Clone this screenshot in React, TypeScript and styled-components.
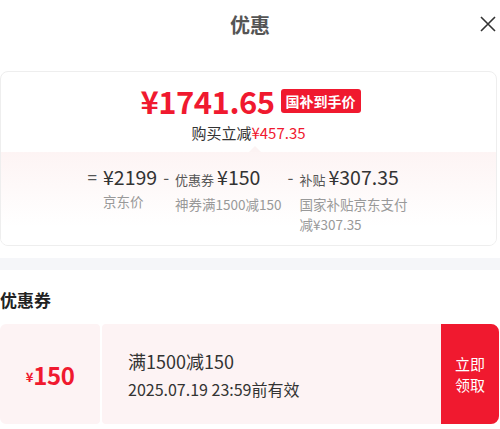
import React from "react"
import styled, { createGlobalStyle } from "styled-components"

const GlobalStyle = createGlobalStyle`
  html, body {
    margin: 0;
    padding: 0;
    background: #fff;
  }
  body {
    font-family: "Noto Sans CJK SC", "Noto Sans", sans-serif;
    color: #333;
    width: 500px;
    height: 429px;
    overflow: hidden;
  }
`

const RED = "#f0192f"

const Page = styled.div`
  width: 500px;
  display: flex;
  flex-direction: column;
`

const Header = styled.div`
  height: 48px;
  display: flex;
  align-items: center;
  justify-content: center;
  position: relative;
`

const Title = styled.h1`
  margin: 0;
  font-size: 20px;
  font-weight: 700;
  color: #555;
`

const CloseBtn = styled.button`
  position: absolute;
  right: 4px;
  top: 16px;
  width: 16px;
  height: 16px;
  padding: 0;
  border: 0;
  background: none;
  display: flex;
`

const PriceCard = styled.div`
  margin: 23px 3px 0 0;
  border: 1px solid #eee;
  border-radius: 8px;
  overflow: hidden;
`

const PriceTop = styled.div`
  height: 80px;
  display: flex;
  flex-direction: column;
  align-items: center;
  padding-top: 12px;
  box-sizing: border-box;
  position: relative;
`

const PriceLine = styled.div`
  display: flex;
  align-items: center;
  gap: 6px;
  height: 34px;
  padding-left: 4px;
`

const BigPrice = styled.span`
  color: ${RED};
  font-size: 31px;
  font-weight: 700;
  letter-spacing: -0.5px;
  line-height: 34px;
`

const Badge = styled.span`
  background: ${RED};
  color: #fff;
  font-size: 14px;
  font-weight: 700;
  border-radius: 3px;
  padding: 0 5px;
  height: 24px;
  line-height: 24px;
`

const SaveLine = styled.div`
  margin-top: 5px;
  font-size: 15px;
  color: #333;
  line-height: 20px;
`

const RedText = styled.span`
  color: ${RED};
`

const Notch = styled.span`
  position: absolute;
  left: 248px;
  bottom: 0;
  width: 0;
  height: 0;
  border-left: 6px solid transparent;
  border-right: 6px solid transparent;
  border-bottom: 6px solid #fcf3f3;
`

const Breakdown = styled.div`
  background: linear-gradient(#fdf4f4, #fff 80%);
  padding: 11px 0 11px;
  display: flex;
  justify-content: center;
  gap: 6px;
`

const Column = styled.div`
  display: flex;
  align-items: flex-start;
  gap: 6px;
`

const Sign = styled.span`
  font-size: 17px;
  color: #555;
  line-height: 28px;
`

const ColBody = styled.div<{ $descWidth?: number }>`
  display: flex;
  flex-direction: column;
  max-width: ${(p) => (p.$descWidth ? `${p.$descWidth}px` : "none")};
`

const TopLine = styled.div`
  display: flex;
  align-items: baseline;
  gap: 3px;
  line-height: 28px;
  white-space: nowrap;
`

const Tag = styled.span`
  font-size: 13px;
  color: #555;
`

const Amount = styled.span`
  font-size: 19.5px;
  color: #333;
  font-weight: 400;
`

const Desc = styled.span`
  font-size: 13.5px;
  color: #999;
  line-height: 20px;
`

const GrayBand = styled.div`
  height: 12px;
  background: #f5f6f9;
  margin-top: 12px;
`

const SectionTitle = styled.h2`
  margin: 18px 0 0;
  font-size: 17px;
  font-weight: 700;
  color: #222;
  line-height: 24px;
`

const Coupon = styled.div`
  margin-top: 12px;
  height: 100px;
  display: flex;
  gap: 2px;
  width: 499px;
`

const Stub = styled.div`
  width: 100px;
  background: #fdf3f4;
  border-radius: 6px 4px 4px 6px;
  display: flex;
  align-items: center;
  justify-content: center;
  color: ${RED};
  font-weight: 700;
`

const Yen = styled.span`
  font-size: 13px;
  margin-top: 4px;
`

const Face = styled.span`
  font-size: 24px;
  letter-spacing: -0.5px;
`

const CouponMain = styled.div`
  flex: 1;
  display: flex;
  background: #fdf3f4;
  border-radius: 4px 8px 8px 4px;
  overflow: hidden;
`

const CouponInfo = styled.div`
  flex: 1;
  display: flex;
  flex-direction: column;
  justify-content: center;
  padding-left: 26px;
  color: #333;
`

const Cond = styled.div`
  font-size: 18px;
  line-height: 26px;
`

const Expire = styled.div`
  font-size: 16px;
  line-height: 24px;
  margin-top: 3px;
`

const ClaimBtn = styled.button`
  width: 58px;
  border: 0;
  background: ${RED};
  color: #fff;
  font-family: inherit;
  font-size: 15px;
  line-height: 21px;
  padding: 0;
`

export default function App() {
  return (
    <Page>
      <GlobalStyle />
      <Header>
        <Title>优惠</Title>
        <CloseBtn aria-label="关闭">
          <svg width="16" height="16" viewBox="0 0 16 16">
            <path d="M1 1 L15 15 M15 1 L1 15" stroke="#333" strokeWidth="1.6" fill="none" />
          </svg>
        </CloseBtn>
      </Header>

      <PriceCard>
        <PriceTop>
          <PriceLine>
            <BigPrice>¥1741.65</BigPrice>
            <Badge>国补到手价</Badge>
          </PriceLine>
          <SaveLine>
            购买立减<RedText>¥457.35</RedText>
          </SaveLine>
          <Notch />
        </PriceTop>
        <Breakdown>
          <Column>
            <Sign>=</Sign>
            <ColBody>
              <TopLine>
                <Amount>¥2199</Amount>
              </TopLine>
              <Desc>京东价</Desc>
            </ColBody>
          </Column>
          <Column>
            <Sign>-</Sign>
            <ColBody>
              <TopLine>
                <Tag>优惠券</Tag>
                <Amount>¥150</Amount>
              </TopLine>
              <Desc>神券满1500减150</Desc>
            </ColBody>
          </Column>
          <Column>
            <Sign>-</Sign>
            <ColBody $descWidth={110}>
              <TopLine>
                <Tag>补贴</Tag>
                <Amount>¥307.35</Amount>
              </TopLine>
              <Desc>国家补贴京东支付减¥307.35</Desc>
            </ColBody>
          </Column>
        </Breakdown>
      </PriceCard>

      <GrayBand />

      <SectionTitle>优惠券</SectionTitle>
      <Coupon>
        <Stub>
          <Yen>¥</Yen>
          <Face>150</Face>
        </Stub>
        <CouponMain>
          <CouponInfo>
            <Cond>满1500减150</Cond>
            <Expire>2025.07.19 23:59前有效</Expire>
          </CouponInfo>
          <ClaimBtn>
            立即
            <br />
            领取
          </ClaimBtn>
        </CouponMain>
      </Coupon>
    </Page>
  )
}
